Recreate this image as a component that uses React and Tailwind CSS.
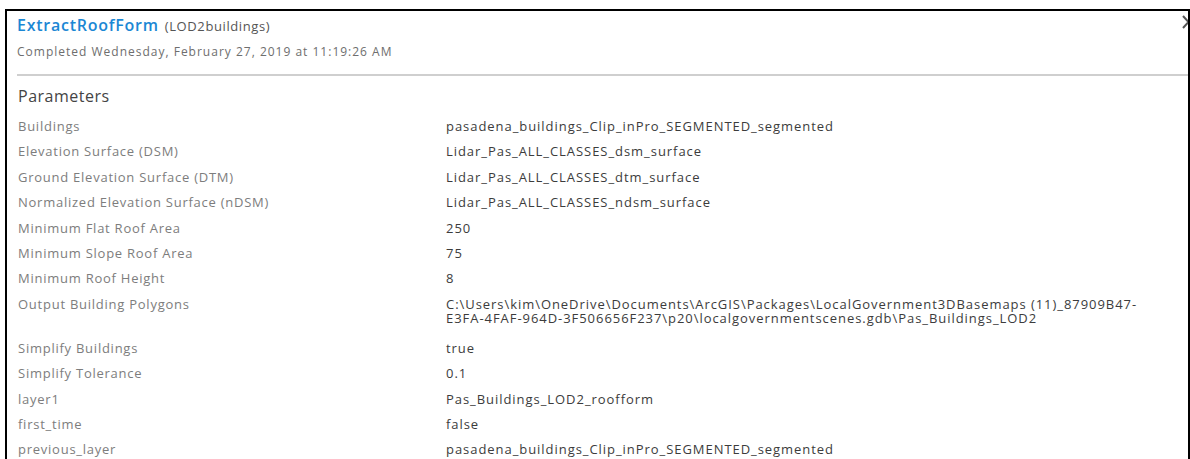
import React from "react";

const rows = [
  ["Buildings", "pasadena_buildings_Clip_inPro_SEGMENTED_segmented"],
  ["Elevation Surface (DSM)", "Lidar_Pas_ALL_CLASSES_dsm_surface"],
  ["Ground Elevation Surface (DTM)", "Lidar_Pas_ALL_CLASSES_dtm_surface"],
  ["Normalized Elevation Surface (nDSM)", "Lidar_Pas_ALL_CLASSES_ndsm_surface"],
  ["Minimum Flat Roof Area", "250"],
  ["Minimum Slope Roof Area", "75"],
  ["Minimum Roof Height", "8"],
  [
    "Output Building Polygons",
    "C:\\Users\\kim\\OneDrive\\Documents\\ArcGIS\\Packages\\LocalGovernment3DBasemaps (11)_87909B47-\nE3FA-4FAF-964D-3F506656F237\\p20\\localgovernmentscenes.gdb\\Pas_Buildings_LOD2",
  ],
  ["Simplify Buildings", "true"],
  ["Simplify Tolerance", "0.1"],
  ["layer1", "Pas_Buildings_LOD2_roofform"],
  ["first_time", "false"],
  ["previous_layer", "pasadena_buildings_Clip_inPro_SEGMENTED_segmented"],
];

function ParamRow({ label, value }) {
  const multi = value.includes("\n");
  return (
    <div className={`flex ${multi ? "h-[44px]" : "h-[25.4px]"}`}>
      <div className="w-[428px] shrink-0 tracking-[0.75px] text-[#7d7d7d]">{label}</div>
      <div className="whitespace-pre tracking-[0.95px] text-[#3c3c3c]">{value}</div>
    </div>
  );
}

export default function App() {
  return (
    <div
      className="h-[459px] w-[1190px] overflow-hidden bg-white pl-[5px] pt-[9px]"
      style={{ fontFamily: "'Open Sans', 'Noto Sans', sans-serif" }}
    >
      <div className="relative h-[470px] w-[1185px] overflow-hidden border-l-2 border-r-2 border-t-2 border-black">
        <svg
          className="absolute right-[-7px] top-[4px]"
          width="13"
          height="14"
          viewBox="0 0 13 14"
        >
          <path d="M1 1 L12 13 M12 1 L1 13" stroke="#555" strokeWidth="2" fill="none" />
        </svg>

        <div className="pl-[10px] pt-[2px]">
          <div className="flex items-baseline gap-[6px] leading-[24px]">
            <span className="text-[16px] font-semibold tracking-[0.75px] text-[#1b87d4]">
              ExtractRoofForm
            </span>
            <span className="text-[13px] tracking-[0.6px] text-[#555]">(LOD2buildings)</span>
          </div>
          <div className="mt-[6px] text-[12px] leading-[16px] tracking-[1px] text-[#6e6e6e]">
            Completed Wednesday, February 27, 2019 at 11:19:26 AM
          </div>
        </div>

        <div className="ml-[10px] mt-[14px] h-[2px] bg-[#cfcfcf]" />

        <div className="pl-[11px] pt-[10px] text-[13px]">
          <div className="mb-[13px] text-[16px] leading-[20px] tracking-[0.5px] text-[#444]">
            Parameters
          </div>
          <div className="leading-[14px]">
            {rows.map(([label, value]) => (
              <ParamRow key={label} label={label} value={value} />
            ))}
          </div>
        </div>
      </div>
    </div>
  );
}
